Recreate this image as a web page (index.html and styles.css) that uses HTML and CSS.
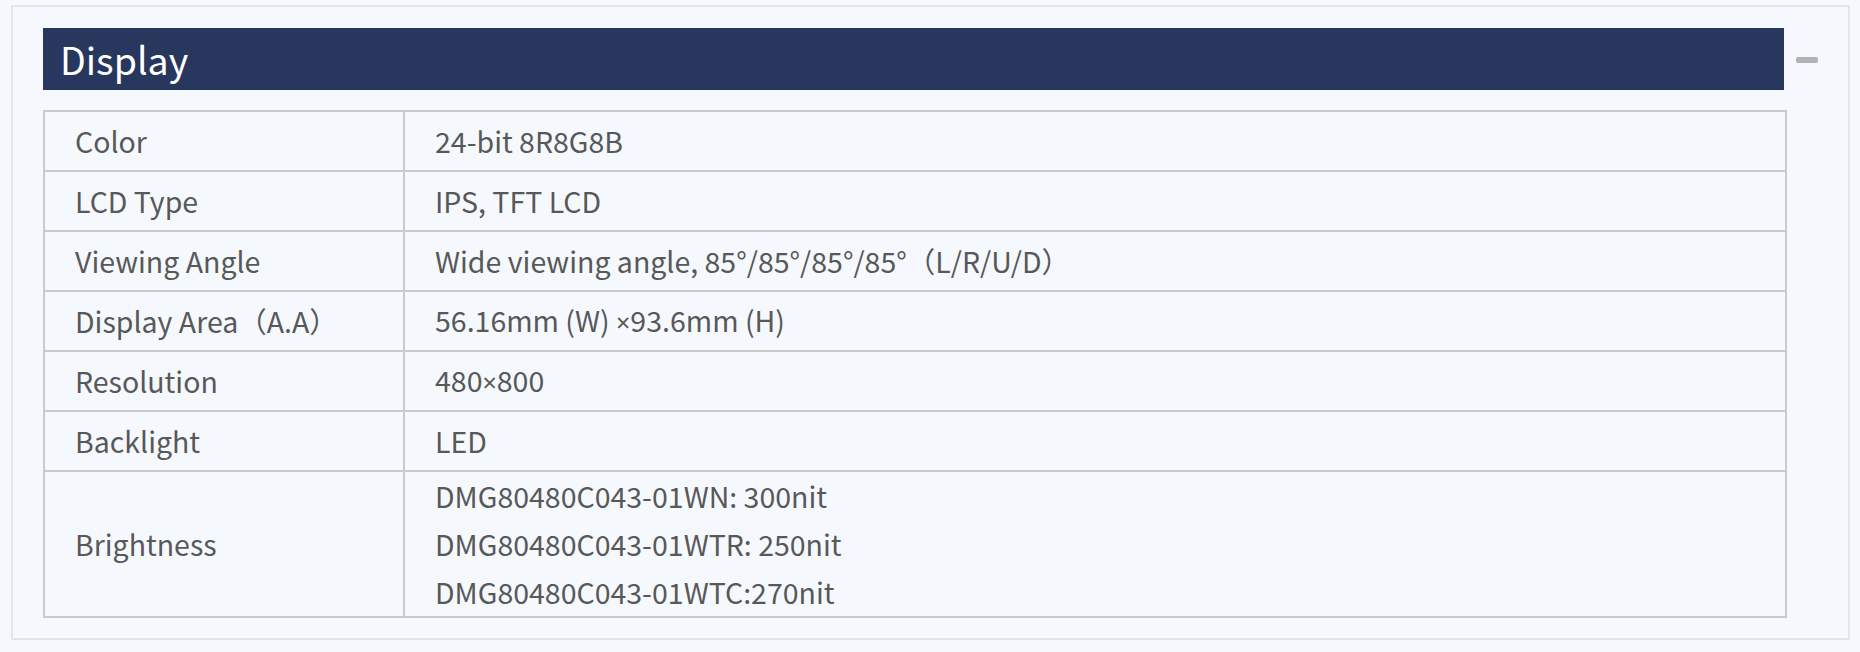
FILE: index.html
```html
<!DOCTYPE html>
<html>
<head>
<meta charset="utf-8">
<link rel="stylesheet" href="styles.css">
</head>
<body>
<section class="panel">
  <div class="panel-head">
    <h2 class="panel-title">Display</h2>
    <span class="collapse" aria-label="collapse"></span>
  </div>
  <table class="spec">
    <tr><td class="label">Color</td><td class="value">24-bit 8R8G8B</td></tr>
    <tr><td class="label">LCD Type</td><td class="value">IPS, TFT LCD</td></tr>
    <tr><td class="label">Viewing Angle</td><td class="value">Wide viewing angle, 85°/85°/85°/85°（L/R/U/D）</td></tr>
    <tr><td class="label">Display Area（A.A）</td><td class="value">56.16mm (W) <span class="times">×</span>93.6mm (H)</td></tr>
    <tr><td class="label">Resolution</td><td class="value">480<span class="times">×</span>800</td></tr>
    <tr><td class="label">Backlight</td><td class="value">LED</td></tr>
    <tr class="multi"><td class="label">Brightness</td><td class="value"><p>DMG80480C043-01WN: 300nit</p><p>DMG80480C043-01WTR: 250nit</p><p>DMG80480C043-01WTC:270nit</p></td></tr>
  </table>
</section>
</body>
</html>
```

FILE: styles.css
```css
html, body {
  margin: 0;
  padding: 0;
  background: #f5f9fe;
}
body {
  padding: 5px 0 0 11px;
  font-family: "Noto Sans CJK SC", "Noto Sans", sans-serif;
  color: #585858;
}
.panel {
  width: 1839px;
  height: 635px;
  box-sizing: border-box;
  border: 2px solid #e3e5e8;
  padding: 21px 0 0 30px;
}
.panel-head {
  display: flex;
  align-items: center;
}
.panel-title {
  margin: 0;
  width: 1741px;
  height: 62px;
  box-sizing: border-box;
  background: #28375e;
  color: #ffffff;
  font-weight: 400;
  font-size: 37.5px;
  line-height: 62px;
  padding-left: 17px;
}
.collapse {
  display: block;
  width: 22px;
  height: 6px;
  border-radius: 2px;
  background: #b2b2b2;
  margin-left: 12px;
  margin-top: 2px;
}
.spec {
  margin-top: 20px;
  width: 1744px;
  border-collapse: separate;
  border-spacing: 0;
  border-top: 2px solid #cacaca;
  border-left: 2px solid #cacaca;
  font-size: 28.5px;
}
.spec td {
  border-right: 2px solid #cacaca;
  border-bottom: 2px solid #cacaca;
  height: 60px;
  padding: 0 0 0 30px;
  box-sizing: border-box;
  vertical-align: middle;
  line-height: 48px;
}
.spec .label {
  width: 360px;
}
.spec .multi td { height: 146px; }
.spec p {
  margin: 0;
  line-height: 48px;
}
.times {
  font-family: "Noto Sans", sans-serif;
  font-size: 25px;
}
```
